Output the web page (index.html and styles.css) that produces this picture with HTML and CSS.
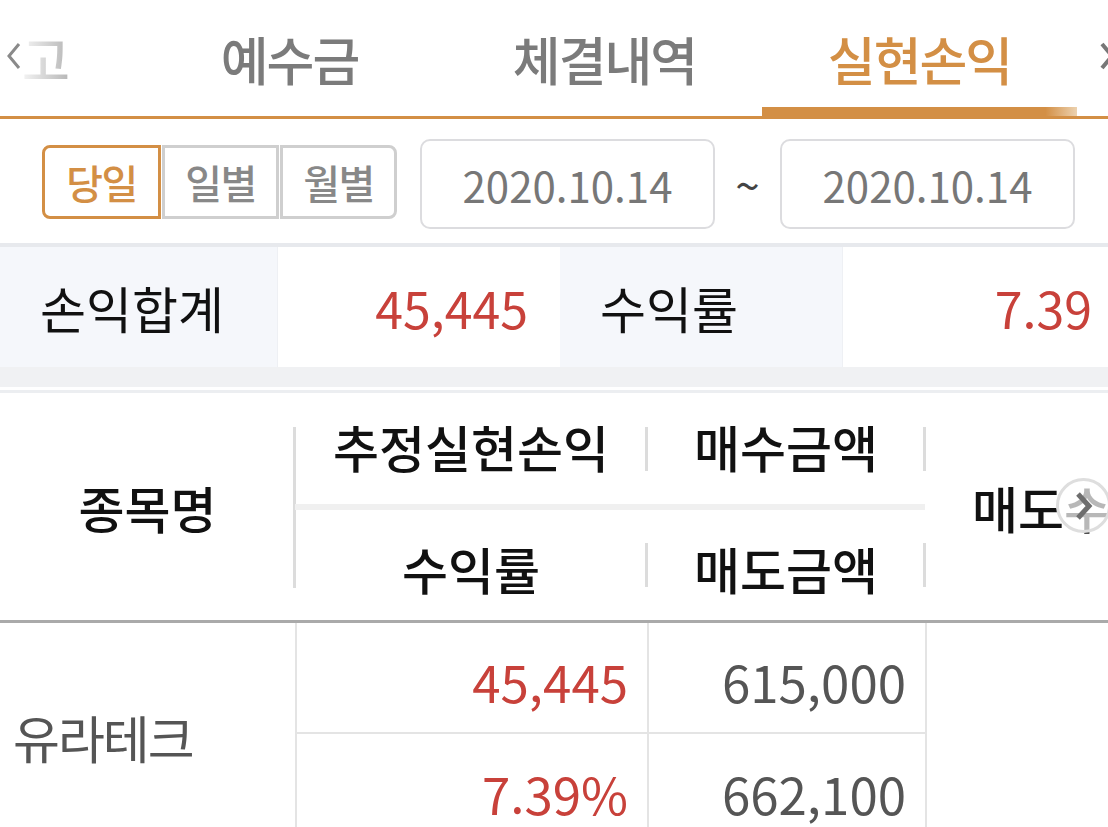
FILE: index.html
```html
<!DOCTYPE html>
<html lang="ko">
  <head>
    <meta charset="UTF-8" />
    <meta name="viewport" content="width=device-width, initial-scale=1.0" />
    <title>실현손익</title>
    <link rel="stylesheet" href="styles.css">
  </head>
  <body>
    <div class="screen">
      <nav class="tabs">
        <svg class="tab-arrow left" width="16" height="32" viewBox="0 0 16 32">
          <polyline points="13,4 3,16 13,28" fill="none" stroke="#8a8a8a" stroke-width="3" />
        </svg>
        <div class="tab prev"><span class="fade">고</span></div>
        <div class="tab">예수금</div>
        <div class="tab">체결내역</div>
        <div class="tab active">실현손익</div>
        <div class="tab">미체결</div>
        <svg class="tab-arrow right" width="14" height="32" viewBox="0 0 14 32">
          <polyline points="2,4 12,16 2,28" fill="none" stroke="#777" stroke-width="4" />
        </svg>
      </nav>

      <div class="filter">
        <div class="segments">
          <button class="seg on">당일</button>
          <button class="seg">일별</button>
          <button class="seg">월별</button>
        </div>
        <div class="date">2020.10.14</div>
        <span class="tilde">~</span>
        <div class="date">2020.10.14</div>
      </div>

      <div class="summary">
        <div class="label">손익합계</div>
        <div class="value">45,445</div>
        <div class="label">수익률</div>
        <div class="value last">7.39</div>
      </div>
      <div class="band"></div>

      <div class="grid-wrap">
        <div class="head">
          <div class="h-name">종목명</div>
          <div class="h-cell top">추정실현손익</div>
          <div class="h-cell top">매수금액</div>
          <div class="h-line"></div>
          <div class="h-cell bottom">수익률</div>
          <div class="h-cell bottom">매도금액</div>
          <div class="h-last">매도수량</div>
        </div>
        <div class="more">
          <svg width="20" height="30" viewBox="0 0 20 30">
            <polyline points="4,3 15,15 4,27" fill="none" stroke="#6e6e6e" stroke-width="5" />
          </svg>
        </div>

        <div class="rows">
          <div class="r-name">유라테크</div>
          <div class="r-cell up first">45,445</div>
          <div class="r-cell first">615,000</div>
          <div class="r-cell up">7.39%</div>
          <div class="r-cell">662,100</div>
          <div class="r-last"></div>
        </div>
      </div>
    </div>
  </body>
</html>
```

FILE: styles.css
```css
body {
  margin: 0;
  background: #fff;
  font-family: "Noto Sans CJK KR", "Noto Sans", sans-serif;
  color: #111;
}
.screen {
  width: 1108px;
  height: 827px;
  overflow: hidden;
}

/* tabs */
.tabs {
  position: relative;
  display: flex;
  height: 116px;
  border-bottom: 3px solid #d38f45;
  overflow: hidden;
}
.tab {
  flex: 0 0 315px;
  display: flex;
  align-items: center;
  justify-content: center;
  position: relative;
  font-size: 52px;
  font-weight: 500;
  letter-spacing: -2px;
  color: #7b7b7b;
}
.tab.prev {
  flex-basis: 132px;
  justify-content: flex-start;
  padding-left: 22px;
  box-sizing: border-box;
}
.fade {
  background: linear-gradient(to right, #f4f4f4, #b8b8b8);
  -webkit-background-clip: text;
  background-clip: text;
  color: transparent;
}
.tab.active {
  color: #d38f45;
}
.tab.active::after {
  content: "";
  position: absolute;
  left: 0;
  right: 0;
  bottom: 0;
  height: 9px;
  background: linear-gradient(to right, #d38f45 90%, #ecd2b0);
}
.tab-arrow {
  position: absolute;
  top: 40px;
}
.tab-arrow.left {
  left: 6px;
}
.tab-arrow.right {
  right: -6px;
}

/* filter row */
.filter {
  display: flex;
  align-items: center;
  height: 118px;
  padding: 6px 0 0 42px;
  border-bottom: 4px solid #e7e9ed;
}
.segments {
  display: flex;
  margin-top: -4px;
}
.seg {
  all: unset;
  width: 117px;
  height: 74px;
  box-sizing: border-box;
  border: 3px solid #cfcfcf;
  text-align: center;
  line-height: 62px;
  font-size: 40px;
  font-weight: 500;
  letter-spacing: -1.5px;
  color: #888;
}
.seg + .seg {
  margin-left: 1px;
}
.seg:first-child {
  width: 119px;
  border-radius: 8px 0 0 8px;
}
.seg:last-child {
  border-radius: 0 8px 8px 0;
}
.seg.on {
  border-color: #d38f45;
  color: #d38f45;
}
.date {
  width: 295px;
  height: 90px;
  box-sizing: border-box;
  border: 2px solid #dcdcdf;
  border-radius: 10px;
  display: flex;
  align-items: center;
  justify-content: center;
  font-size: 42px;
  color: #777;
}
.segments + .date {
  margin-left: 23px;
}
.tilde {
  width: 65px;
  text-align: center;
  font-size: 44px;
  color: #444;
}

/* summary */
.summary {
  display: grid;
  grid-template-columns: 278px 282px 283px 1fr;
  height: 120px;
  font-size: 50px;
}
.summary .label {
  background: #f5f7fb;
  display: flex;
  align-items: center;
  padding-left: 40px;
  border-right: 1px solid #eef0f4;
}
.summary .value {
  display: flex;
  align-items: center;
  justify-content: flex-end;
  padding-right: 32px;
  color: #c8413a;
}
.summary .value.last {
  padding-right: 16px;
}
.band {
  height: 20px;
  background: #f0f1f3;
  border-bottom: 3px solid #fff;
  box-shadow: 0 3px 0 #eceef1;
  margin-bottom: 3px;
}

/* table */
.grid-wrap {
  position: relative;
  overflow: hidden;
}
.head,
.rows {
  display: grid;
  grid-template-columns: 295px 352px 278px 278px;
  width: 1203px;
}
.head {
  grid-template-rows: 111px 6px 110px;
  border-bottom: 3px solid #aaa;
  font-weight: 500;
  font-size: 50px;
}
.head > div {
  display: flex;
  align-items: center;
  justify-content: center;
  position: relative;
}
.h-name {
  grid-row: 1 / 4;
  grid-column: 1;
}
.h-name::after {
  content: "";
  position: absolute;
  right: -1px;
  top: 34px;
  bottom: 32px;
  width: 3px;
  background: #dcdcdc;
}
.h-cell {
  padding-bottom: 6px;
}
.h-cell.bottom {
  padding-bottom: 0;
  padding-top: 6px;
}
.h-cell::after {
  content: "";
  position: absolute;
  right: -1px;
  width: 3px;
  height: 44px;
  background: #dcdcdc;
}
.h-cell.top::after {
  top: 34px;
}
.h-cell.bottom::after {
  top: 33px;
}
.h-line {
  grid-column: 2 / 4;
  background: #f0f0f0;
}
.h-last {
  grid-column: 4;
  grid-row: 1 / 4;
}
.more {
  position: absolute;
  left: 1056px;
  top: 85px;
  width: 55px;
  height: 55px;
  box-sizing: border-box;
  border: 3px solid #dedede;
  border-radius: 50%;
  background: rgba(255, 255, 255, 0.7);
  display: flex;
  align-items: center;
  justify-content: center;
}

.rows {
  grid-template-rows: 111px 112px;
  font-size: 51px;
}
.r-name {
  grid-row: 1 / 3;
  display: flex;
  align-items: center;
  padding-left: 13px;
  padding-top: 4px;
  font-size: 51px;
  letter-spacing: -2px;
  color: #555;
}
.r-cell {
  display: flex;
  align-items: center;
  justify-content: flex-end;
  padding-right: 19px;
  padding-top: 6px;
  border-left: 2px solid #e4e4e4;
  color: #555;
}
.r-cell.first {
  border-bottom: 2px solid #e4e4e4;
}
.r-cell.up {
  color: #c8413a;
}
.r-last {
  grid-column: 4;
  grid-row: 1 / 3;
  border-left: 2px solid #e4e4e4;
}
```
